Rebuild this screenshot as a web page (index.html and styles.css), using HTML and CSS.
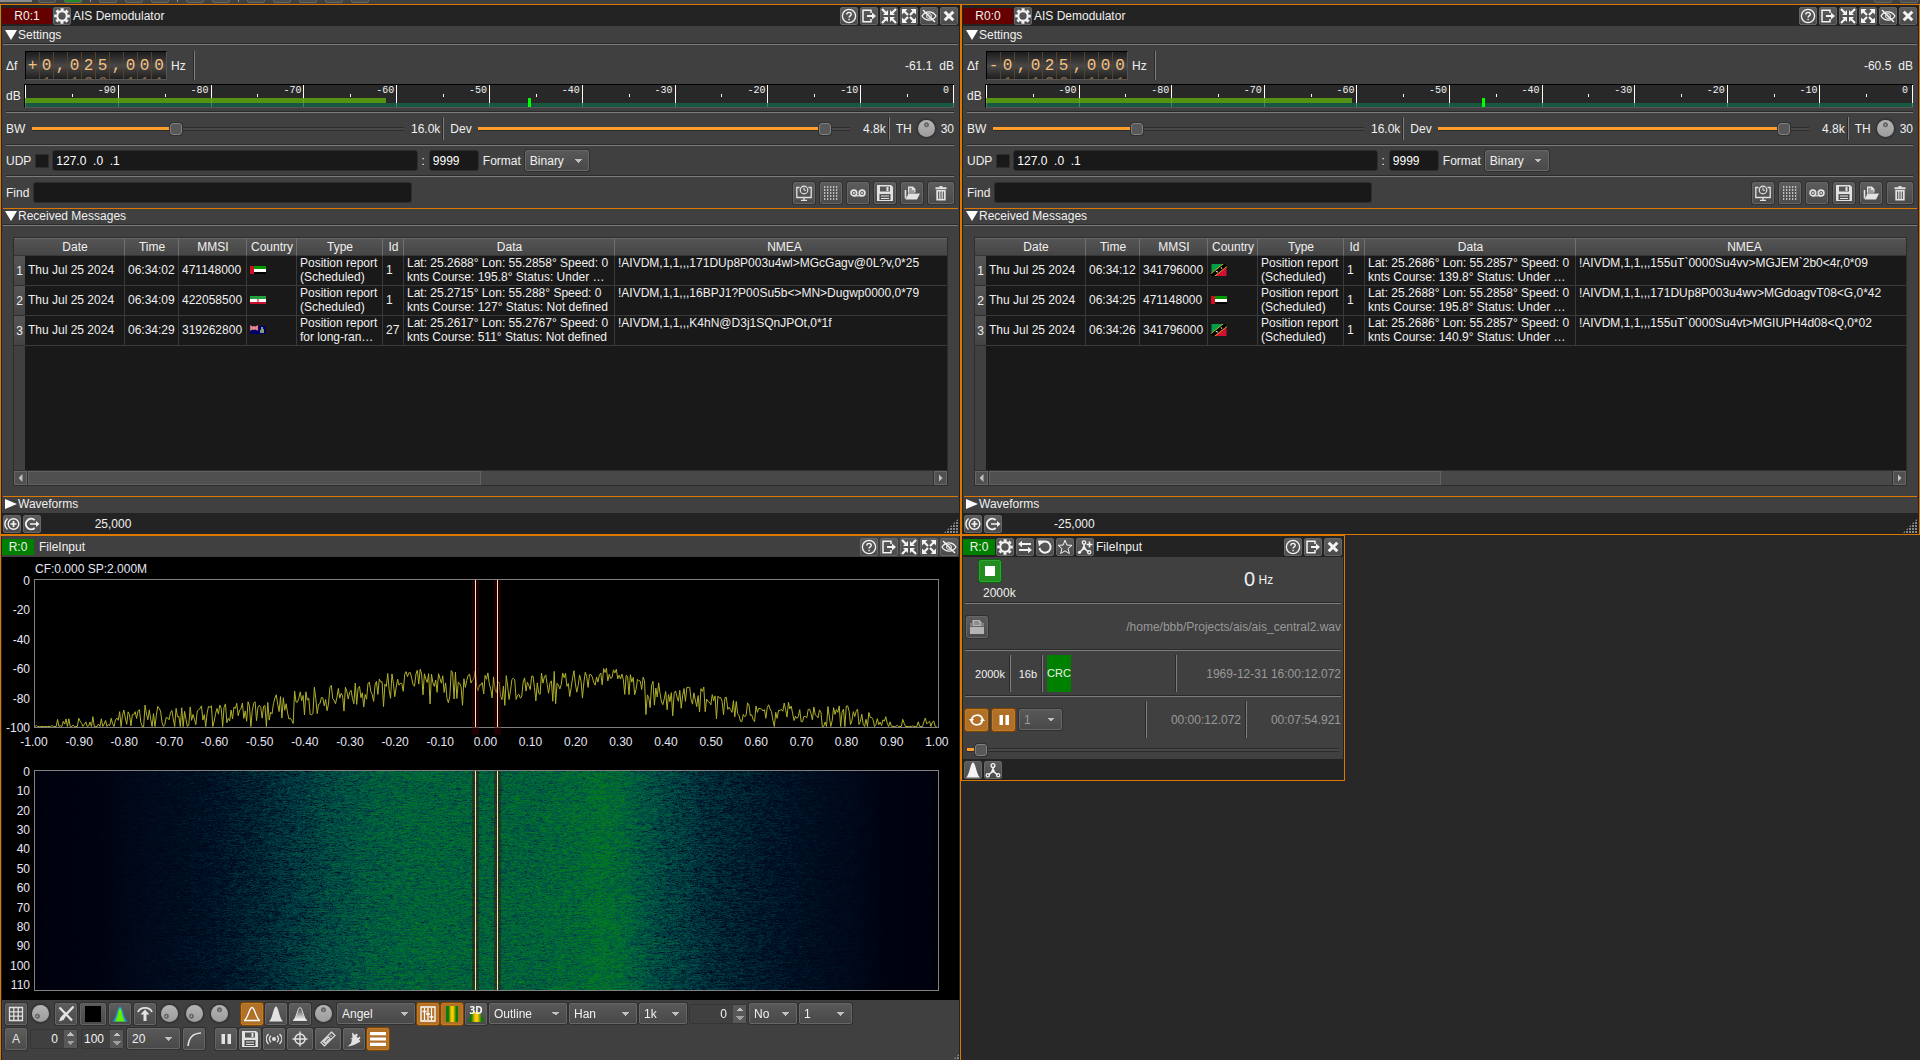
FILE: index.html
```html
<!DOCTYPE html>
<html lang="en">
<head>
  <meta charset="UTF-8">
  <meta name="viewport" content="width=device-width, initial-scale=1">
  <title>AIS Demodulator</title>
  <link rel="stylesheet" href="styles.css">
</head>
<body>

  <!-- icon sprite -->
  <svg class="sprite" aria-hidden="true">
    <defs>
      <linearGradient id="fade" x1="0" y1="0" x2="0" y2="1"><stop offset="0" stop-color="#444"/><stop offset=".3" stop-color="#777"/><stop offset="1" stop-color="#fff"/></linearGradient>
      <linearGradient id="gyg"><stop offset="0" stop-color="#0a7a0a"/><stop offset=".2" stop-color="#0a7a0a"/><stop offset=".45" stop-color="#ffc800"/><stop offset=".6" stop-color="#ffc800"/><stop offset=".85" stop-color="#0a7a0a"/><stop offset="1" stop-color="#0a7a0a"/></linearGradient>
    </defs>
    <symbol id="help" viewBox="0 0 16 16"><circle cx="8" cy="8" r="6.6" fill="none" stroke="currentColor" stroke-width="1.3"/><path d="M5.800 6.600c0-3 4.500-2.900 4.500-.3 0 1.600-2.200 1.600-2.200 3.300M8.100 10.800v1.500" fill="none" stroke="currentColor" stroke-width="1.400"/></symbol>
    <symbol id="export" viewBox="0 0 16 16"><path d="M10 5V2.200H2v11.600h8V11" fill="none" stroke="currentColor" stroke-width="1.500"/><path d="M6 7h5V4.500L15 8l-4 3.500V9H6z" fill="currentColor"/></symbol>
    <symbol id="shrink" viewBox="0 0 16 16"><path d="M1 1l5 5M15 1l-5 5M1 15l5-5M15 15l-5-5" stroke="currentColor" stroke-width="2.200"/><path d="M7 2v5H2zM9 2v5h5zM7 14V9H2zM9 14V9h5z" fill="currentColor"/></symbol>
    <symbol id="expand" viewBox="0 0 16 16"><path d="M3 3l4 4M13 3L9 7M3 13l4-4M13 13L9 9" stroke="currentColor" stroke-width="2.200"/><path d="M1 1h5.500L1 6.500zM15 1H9.500L15 6.500zM1 15h5.500L1 9.500zM15 15H9.500L15 9.500z" fill="currentColor"/></symbol>
    <symbol id="hide" viewBox="0 0 16 16"><path d="M1 8c3.500-5.500 10.500-5.500 14 0-3.500 5.500-10.500 5.500-14 0z" fill="none" stroke="currentColor" stroke-width="1.300"/><circle cx="8" cy="8" r="2.400" fill="none" stroke="currentColor"/><path d="M2 2l12 12" stroke="currentColor" stroke-width="1.500"/></symbol>
    <symbol id="close" viewBox="0 0 16 16"><path d="M3.700 3.700l8.600 8.600M12.300 3.700l-8.600 8.600" stroke="currentColor" stroke-width="3"/></symbol>
    <symbol id="gear" viewBox="0 0 16 16"><circle cx="8" cy="8" r="4.800" fill="none" stroke="currentColor" stroke-width="2.200"/><circle cx="8" cy="8" r="6.700" fill="none" stroke="currentColor" stroke-width="2.200" stroke-dasharray="3 2.260" stroke-dashoffset="1.500"/></symbol>
    <symbol id="swap" viewBox="0 0 16 16"><path d="M5 1.800v2.200h9v2H5v2.200L1 5zM11 7.800V10H2v2h9v2.200l4-3.200z" fill="currentColor"/></symbol>
    <symbol id="reload" viewBox="0 0 16 16"><path d="M4 4.200A5.600 5.600 0 1 1 2.500 9" fill="none" stroke="currentColor" stroke-width="2"/><path d="M1 1.500h6L2 7.500z" fill="currentColor"/></symbol>
    <symbol id="star" viewBox="0 0 16 16"><path d="M8 1.200l1.900 4.900 5.100.2-4 3.300 1.400 5L8 11.800l-4.400 2.800 1.400-5-4-3.300 5.100-.2z" fill="none" stroke="currentColor"/></symbol>
    <symbol id="net" viewBox="0 0 16 16"><path d="M8 5v4L3.500 13M8 9l4.500 4" fill="none" stroke="currentColor" stroke-width="1.600"/><circle cx="8" cy="3.500" r="1.900" fill="none" stroke="currentColor" stroke-width="1.300"/><circle cx="8" cy="9" r="1.700" fill="currentColor"/><circle cx="2.800" cy="13.300" r="1.600" fill="none" stroke="currentColor" stroke-width="1.300"/><circle cx="13.200" cy="13.300" r="1.600" fill="none" stroke="currentColor" stroke-width="1.300"/></symbol>
    <symbol id="net-plus" viewBox="0 0 16 16"><path d="M7 5v4L3 13M7 9l4.500 4M12.500 2.500v6M9.500 5.500h6" fill="none" stroke="currentColor" stroke-width="1.600"/><circle cx="7" cy="3.500" r="1.700" fill="none" stroke="currentColor" stroke-width="1.300"/><circle cx="7" cy="9" r="1.700" fill="currentColor"/><circle cx="2.500" cy="13.300" r="1.600" fill="currentColor"/><circle cx="12.200" cy="13.300" r="1.600" fill="none" stroke="currentColor" stroke-width="1.300"/></symbol>
    <symbol id="monitor" viewBox="0 0 16 16"><path d="M3.500 2.500H.8v10h14.400v-10h-2.700M8 12.500V15M5 15.300h6" fill="none" stroke="currentColor" stroke-width="1.300"/><circle cx="8" cy="5" r="3.800" fill="none" stroke="currentColor" stroke-width="1.200"/><path d="M8 2.500V5.300h2" fill="none" stroke="currentColor"/></symbol>
    <symbol id="dots" viewBox="0 0 16 16"><path d="M1 2h15M1 5h15M1 8h15M1 11h15M1 14h15" stroke="currentColor" stroke-width="1.300" stroke-dasharray="1.300 1.700"/></symbol>
    <symbol id="reels" viewBox="0 0 16 16"><g fill="none" stroke="currentColor"><circle cx="3.900" cy="8" r="2.800" stroke-width="1.700"/><circle cx="12.100" cy="8" r="2.800" stroke-width="1.700"/><path d="M4 10.800h8" stroke-width="1.200"/></g><circle cx="3.900" cy="8" r="1" fill="currentColor"/><circle cx="12.100" cy="8" r="1" fill="currentColor"/></symbol>
    <symbol id="save" viewBox="0 0 16 16"><path fill-rule="evenodd" d="M0 0h14l2 2v14H0zM3 1.500v5h10v-5zM2.500 9v6h11V9z" fill="currentColor"/><path d="M9.500 2h2v4h-2zM4 10.500h8v1H4zM4 13h8v1H4z" fill="currentColor"/></symbol>
    <symbol id="open" viewBox="0 0 16 16"><path d="M4 1.500h5l2.500 2.500v5H4z" fill="currentColor"/><path d="M1.500 5v8.500" stroke="currentColor" stroke-width="1.600"/><path d="M4.500 8.500H16L13 14.500H1.500z" fill="currentColor"/><path d="M5 4h3M5 6h5.500M4.500 8h8" stroke="#555"/></symbol>
    <symbol id="trash" viewBox="0 0 16 16"><path d="M2.500 2.200h4V1h3v1.200h4v2h-11zM3.300 5h9.400v10.500H3.300z" fill="currentColor"/><path d="M5.700 6.500v7.500M8 6.500v7.500M10.300 6.500v7.500" stroke="#444" stroke-width="1"/></symbol>
    <symbol id="add-source" viewBox="0 0 16 16"><g fill="none" stroke="currentColor" stroke-width="1.400"><circle cx="9.500" cy="8" r="5.300"/><path d="M3.500 2.500C0 5.500 0 10.500 3.500 13.500"/><path d="M9.500 5v6M6.500 8h6" stroke-width="1.700"/></g></symbol>
    <symbol id="goto" viewBox="0 0 16 16"><path d="M10.700 4A5.300 5.300 0 1 0 10.700 12" fill="none" stroke="currentColor" stroke-width="2"/><path d="M6 7.300h6V5l3.500 3-3.500 3V8.800H6z" fill="currentColor"/></symbol>
    <symbol id="grid" viewBox="0 0 16 16"><path d="M1.500 1.500h13v13h-13zM1.500 5.800h13M1.500 10.200h13M5.800 1.500v13M10.200 1.500v13" fill="none" stroke="currentColor" stroke-width="1.300"/></symbol>
    <symbol id="clear" viewBox="0 0 16 16"><path d="M15.500 .500L8 8.500M1.500 1.500l12.500 13" stroke="currentColor" stroke-width="2.300"/><path d="M9.500 7.500L5.500 14l-4.500 1.500 1.500-4 5-5.500z" fill="currentColor"/></symbol>
    <symbol id="phosphor" viewBox="0 0 16 16"><path d="M0 15.500C4 14 5 1 8 .500c3 .5 4 13.500 8 15z" fill="#2090e0"/><path d="M2.500 15.500C5.500 14 6 3 8 2c2 1 2.500 12 5.500 13.500z" fill="#60f000"/></symbol>
    <symbol id="up" viewBox="0 0 16 16"><path d="M1 6C3 .500 13 .500 15 6" fill="none" stroke="currentColor" stroke-width="1.800"/><path d="M8 3.500l4.500 5h-3V15h-3V8.500h-3z" fill="currentColor"/></symbol>
    <symbol id="peak-line" viewBox="0 0 16 16"><path d="M0 14.500C4 13.500 5 1.500 8 1.500s4 12 8 13z" fill="none" stroke="currentColor" stroke-width="1.300"/></symbol>
    <symbol id="peak-fill" viewBox="0 0 16 16"><path d="M1 15.500C4.500 13 5.500 .500 8 .500s3.500 12.500 7 15z" fill="currentColor"/></symbol>
    <symbol id="peak-fade" viewBox="0 0 16 16"><path d="M1 14.500C4.500 13 5.500 1.500 8 1.500s3.500 11.500 7 13z" fill="url(#fade)" stroke="#ddd"/></symbol>
    <symbol id="levels" viewBox="0 0 16 16"><path d="M1 1h14v14H1z" fill="none" stroke="currentColor" stroke-width="1.300"/><path d="M4.500 2v12M8 2v12M11.500 2v12M2.500 5.500h4M6 8h4M9.500 11h4" stroke="currentColor" stroke-width="1.300"/></symbol>
    <symbol id="colormap" viewBox="0 0 16 16"><path d="M2 0h12v16H2z" fill="url(#gyg)"/></symbol>
    <symbol id="curve" viewBox="0 0 16 16"><path d="M2 15C3 7 6 2.500 15 2" fill="none" stroke="currentColor" stroke-width="1.600"/></symbol>
    <symbol id="pause" viewBox="0 0 16 16"><path d="M3.500 3H7v10H3.500zM9.500 3H13v10H9.500z" fill="currentColor"/></symbol>
    <symbol id="radio" viewBox="0 0 16 16"><circle cx="8" cy="8" r="2" fill="currentColor"/><path d="M5 4.800c-2 2-2 4.400 0 6.400M2.500 3c-3 3-3 7 0 10M11 4.800c2 2 2 4.400 0 6.400M13.500 3c3 3 3 7 0 10" fill="none" stroke="currentColor" stroke-width="1.300"/></symbol>
    <symbol id="target" viewBox="0 0 16 16"><circle cx="8" cy="8" r="5" fill="none" stroke="currentColor" stroke-width="1.500"/><path d="M8 .500v15M.500 8h15" stroke="currentColor" stroke-width="1.400"/></symbol>
    <symbol id="ruler" viewBox="0 0 16 16"><path d="M11.500 1L15 4.500 4.500 15 1 11.500zM3.500 11l5-5 1.500 1.500-5 5zM10.500 4.500l1 1" fill="none" stroke="currentColor" stroke-width="1.200"/></symbol>
    <symbol id="plug" viewBox="0 0 16 16"><path d="M6 1.500l3 2.500 1.500-1.500 1.500 1.500-1.500 1.500 1.500 1.500 1.500-1.500 1 1.500-1.500 1.500 1.500 2-4.500 2.500-3.500 1.500-5 1 3.500-3 1-4-1.500-1 2-.5z" fill="currentColor"/></symbol>
    <symbol id="menu" viewBox="0 0 16 16"><path d="M0 1h16v3.200H0zM0 6.400h16v3.200H0zM0 11.800h16V15H0z" fill="currentColor"/></symbol>
    <symbol id="stop" viewBox="0 0 16 16"><path d="M3 3h10v10H3z" fill="currentColor"/></symbol>
    <symbol id="loop" viewBox="0 0 16 16"><path d="M2.500 8A5.700 5.700 0 0 1 13.500 7M13.500 8A5.700 5.700 0 0 1 2.500 9" fill="none" stroke="currentColor" stroke-width="1.700"/><path d="M0 7h5L2.500 10.500zM11 9h5l-2.500-3.500z" fill="currentColor"/></symbol>
    <symbol id="file" viewBox="0 0 16 16"><path d="M1 8h14v7H1zM3.500 1h7l2 2v4h-9zM1.500 4h1v3.500h-1zM13.500 4h1v3.500h-1z" fill="currentColor"/><path d="M5 3h5M5 5h6M1 7.500h14" stroke="#666"/></symbol>

    <symbol id="flag-ae" viewBox="0 0 16 8"><path fill="#009a00" d="M0 0h16v3H0z"/><path fill="#fff" d="M0 3h16v3H0z"/><path fill="#000" d="M0 6h16v2H0z"/><path fill="#d01020" d="M0 0h4v8H0z"/></symbol>
    <symbol id="flag-ir" viewBox="0 0 16 8"><path fill="#239f40" d="M0 0h16v3H0z"/><path fill="#fff" d="M0 3h16v3H0z"/><path fill="#c8102e" d="M0 6h16v2H0z"/><path fill="#d88" d="M7 3h2v3H7z"/></symbol>
    <symbol id="flag-ky" viewBox="0 0 16 8"><path fill="#00006b" d="M0 0h16v8H0z"/><path stroke="#e88" stroke-width="1.500" d="M0 0l8 4M8 0L0 4M4 0v4M0 2h8"/><path fill="#8a9a70" d="M11 1h2v2h1v4h-4V4h1z"/></symbol>
    <symbol id="flag-kn" viewBox="0 0 15 12"><path fill="#009e49" d="M0 0h15L0 12z"/><path fill="#d21034" d="M15 0v12H0z"/><path stroke="#e8c020" stroke-width="5" d="M0 12L15 0"/><path stroke="#000" stroke-width="3.600" d="M0 12L15 0"/><path fill="#fff" d="M4 7l2 0 0 2zM9 3l2 1-1 1z"/></symbol>
  </svg>

  <div class="toolbar" id="toolbar"></div>

  <main class="desk">
    <section class="panel" id="ais1"></section>
    <section class="panel" id="ais0"></section>

    <section class="panel spectrum">
      <header class="title-bar plain">
        <span class="badge green">R:0</span>
        <h2 class="spaced">FileInput</h2>
        <button class="tool" aria-label="Help"><svg><use href="#help"/></svg></button>
        <button class="tool" aria-label="Move to workspace"><svg><use href="#export"/></svg></button>
        <button class="tool" aria-label="Shrink"><svg><use href="#shrink"/></svg></button>
        <button class="tool" aria-label="Maximize"><svg><use href="#expand"/></svg></button>
        <button class="tool" aria-label="Hide"><svg><use href="#hide"/></svg></button>
      </header>
      <div class="plots">
        <div class="caption">CF:0.000 SP:2.000M</div>
        <div class="axis-y"><span>0</span><span>-20</span><span>-40</span><span>-60</span><span>-80</span><span>-100</span></div>
        <div class="plot">
          <canvas id="trace"></canvas>
          <i class="marker low"></i><i class="marker high"></i>
        </div>
        <div class="axis-x" id="freqAxis"></div>
        <div class="axis-y times" id="timeAxis"></div>
        <div class="plot">
          <canvas id="waterfall"></canvas>
          <i class="marker low"></i><i class="marker high"></i>
        </div>
      </div>
      <div class="controls">
        <div class="control-row">
          <div class="group">
            <button class="btn" aria-label="Grid"><svg><use href="#grid"/></svg></button>
            <input type="range" class="knob down" aria-label="Grid intensity">
            <button class="btn" aria-label="Clear spectrum"><svg><use href="#clear"/></svg></button>
            <button class="btn wide" aria-label="Trace color"><span class="swatch"></span></button>
            <button class="btn" aria-label="Phosphor"><svg><use href="#phosphor"/></svg></button>
            <button class="btn" aria-label="Max hold"><svg><use href="#up"/></svg></button>
            <input type="range" class="knob down" aria-label="Decay">
            <input type="range" class="knob down" aria-label="Decay divisor">
            <input type="range" class="knob" aria-label="Stroke">
          </div>
          <div class="group tight">
            <button class="btn on" aria-label="Line"><svg><use href="#peak-line"/></svg></button>
            <button class="btn" aria-label="Fill"><svg><use href="#peak-fill"/></svg></button>
            <button class="btn" aria-label="Gradient"><svg><use href="#peak-fade"/></svg></button>
            <input type="range" class="knob" aria-label="Trace intensity">
            <select class="w78" aria-label="Color map"><option>Angel</option></select>
            <button class="btn on" aria-label="Invert"><svg><use href="#levels"/></svg></button>
            <button class="btn on" aria-label="Waterfall"><svg><use href="#colormap"/></svg></button>
            <button class="btn" aria-label="3D spectrogram"><svg viewBox="0 0 16 16"><path d="M4 6h8l4 10H0z" fill="url(#gyg)"/><text x="8" y="8" class="cube">3D</text></svg></button>
            <select class="w78" aria-label="3D style"><option>Outline</option></select>
            <select class="w68" aria-label="Window"><option>Han</option></select>
            <select class="w48" aria-label="FFT size"><option>1k</option></select>
            <span class="spin w58"><input type="number" value="0" aria-label="Overlap"><span class="steps"><button aria-label="Up"></button><button aria-label="Down"></button></span></span>
            <select class="w48" aria-label="Averaging mode"><option>No</option></select>
            <select class="w53" aria-label="Averages"><option>1</option></select>
          </div>
        </div>
        <div class="control-row">
          <div class="group">
            <button class="btn">A</button>
            <span class="spin w48"><input type="number" value="0" aria-label="Reference level"><span class="steps"><button aria-label="Up"></button><button aria-label="Down"></button></span></span>
            <span class="spin w43"><input type="number" value="100" aria-label="Range"><span class="steps"><button aria-label="Up"></button><button aria-label="Down"></button></span></span>
            <select class="w53" aria-label="Frame rate"><option>20</option></select>
            <button class="btn" aria-label="Log or linear"><svg><use href="#curve"/></svg></button>
          </div>
          <div class="group tight">
            <button class="btn" aria-label="Freeze"><svg><use href="#pause"/></svg></button>
            <button class="btn" aria-label="Save"><svg><use href="#save"/></svg></button>
            <button class="btn" aria-label="Spectrum server"><svg><use href="#radio"/></svg></button>
            <button class="btn wide" aria-label="Markers"><svg><use href="#target"/></svg></button>
            <button class="btn wide" aria-label="Measurements"><svg><use href="#ruler"/></svg></button>
            <button class="btn" aria-label="Calibration"><svg><use href="#plug"/></svg></button>
            <button class="btn on" aria-label="Controls"><svg><use href="#menu"/></svg></button>
          </div>
        </div>
        <span class="grip"></span>
      </div>
    </section>

    <section class="panel device">
      <header class="title-bar">
        <span class="badge green">R:0</span>
        <button class="tool" aria-label="Settings"><svg><use href="#gear"/></svg></button>
        <button class="tool" aria-label="Change device"><svg><use href="#swap"/></svg></button>
        <button class="tool" aria-label="Reload"><svg><use href="#reload"/></svg></button>
        <button class="tool" aria-label="Presets"><svg><use href="#star"/></svg></button>
        <button class="tool" aria-label="Add channel"><svg><use href="#net-plus"/></svg></button>
        <h2>FileInput</h2>
        <button class="tool" aria-label="Help"><svg><use href="#help"/></svg></button>
        <button class="tool" aria-label="Move to workspace"><svg><use href="#export"/></svg></button>
        <button class="tool" aria-label="Close"><svg><use href="#close"/></svg></button>
      </header>
      <div class="device-body">
        <div class="device-row run">
          <div class="rate">
            <button class="btn play" aria-label="Stop"><svg><use href="#stop"/></svg></button>
            <span>2000k</span>
          </div>
          <div class="freq"><span class="big">0</span> <span>Hz</span></div>
        </div>
        <hr>
        <div class="device-row path">
          <button class="btn" aria-label="Open file" disabled><svg><use href="#file"/></svg></button>
          <span class="dim push">/home/bbb/Projects/ais/ais_central2.wav</span>
        </div>
        <hr>
        <div class="device-row format">
          <span class="small cell-rate">2000k</span><i class="vsep"></i>
          <span class="small cell-bits">16b</span><i class="vsep"></i>
          <span class="crc small">CRC</span>
          <i class="vsep push"></i><span class="dim cell-date">1969-12-31 16:00:12.072</span>
        </div>
        <hr>
        <div class="device-row format">
          <button class="btn on big-btn" aria-label="Loop"><svg><use href="#loop"/></svg></button>
          <button class="btn on big-btn" aria-label="Pause"><svg><use href="#pause"/></svg></button>
          <select class="w43" aria-label="Acceleration" disabled><option>1</option></select>
          <i class="vsep push"></i><span class="dim cell-time">00:00:12.072</span>
          <i class="vsep"></i><span class="dim cell-time">00:07:54.921</span>
        </div>
        <div class="seek"><input type="range" class="slider" min="0" max="1000" value="22" style="--fill: 3%" aria-label="Position"></div>
      </div>
      <footer class="status-bar">
        <button class="tool" aria-label="Spectrum"><svg><use href="#peak-fill"/></svg></button>
        <button class="tool" aria-label="Channels"><svg><use href="#net"/></svg></button>
      </footer>
    </section>
  </main>

  <script src="app.js"></script>
</body>
</html>
```

FILE: styles.css
```css
* {
  box-sizing: border-box;
}
body {
  margin: 0;
  height: 100vh;
  overflow: hidden;
  display: flex;
  flex-direction: column;
  background: #282828;
  color: #f0f0f0;
  font: 12px/14px "Liberation Sans", Arial, sans-serif;
}
button, input, select {
  font: inherit;
  color: inherit;
  margin: 0;
}
h2 {
  margin: 0;
  font-size: 12px;
  font-weight: normal;
}
hr {
  margin: 0;
  height: 2px;
  border: 0;
  border-top: 1px solid #2a2a2a;
  background: #7d7d7d;
}
.sprite {
  position: absolute;
  width: 0;
  height: 0;
}

/* main toolbar, scrolled almost out of view */
.toolbar {
  flex: none;
  height: 4px;
  padding: 0 2px 1px 0;
  overflow: hidden;
  display: flex;
  align-items: flex-end;
  gap: 8px;
  background: #404040;
}
.toolbar .tab {
  width: 32px;
  height: 2px;
  margin-right: -2px;
  align-self: flex-start;
  background: #8c8c8c;
}
.toolbar .tab.gap {
  width: 1px;
  margin: 0;
}
.toolbar .tab.end {
  margin-left: auto;
  width: 0;
}
.toolbar .tool.go {
  background: #228b22;
}

.desk {
  flex: 1;
  min-height: 0;
  display: grid;
  grid-template-columns: 961fr 959fr;
  grid-template-rows: auto minmax(0, 1fr);
}
.panel {
  min-width: 0;
  border: 1px solid #dc7800;
  padding: 0 1px;
  background: #232323;
  display: flex;
  flex-direction: column;
}
.spectrum {
  border-bottom: 0;
}
.title-bar {
  height: 21px;
  padding: 1px 1px 0 0;
  display: flex;
  align-items: center;
  gap: 2px;
  background: #232323;
}
.title-bar.plain {
  background: #404040;
}
.title-bar h2 {
  flex: 1;
}
.title-bar h2.spaced {
  margin-left: 4px;
}
.badge {
  width: 50px;
  height: 16px;
  margin-right: -1px;
  line-height: 16px;
  text-align: center;
  background: #640000;
}
.badge.green {
  width: 32px;
  background: #008000;
}

/* buttons */
.tool, .btn {
  flex: none;
  display: flex;
  align-items: center;
  justify-content: center;
  padding: 0;
  color: #f4f4f4;
  background: linear-gradient(#5c5c5c, #4b4b4b);
  border: 1px solid #666;
  border-radius: 2px;
}
.tool {
  width: 18px;
  height: 18px;
}
.tool svg {
  width: 16px;
  height: 16px;
}
.btn {
  width: 22px;
  height: 22px;
  color: #e2e2e2;
  box-shadow: 0 0 0 1px #303030;
}
.btn svg {
  width: 16px;
  height: 16px;
}
.btn.wide {
  width: 26px;
}
.btn.big-btn {
  width: 23px;
}
.btn.on {
  color: #fff;
  background: #b07028;
  border-color: #c07c2c;
  box-shadow: 0 0 0 1px #7c4600;
}
.btn.play {
  width: 22px;
  color: #fff;
  background: #228b22;
  border-color: #2fa52f;
  box-shadow: 0 0 0 1px #0a6410;
}
.btn:disabled {
  color: #b4b4b4;
}
.cube {
  font: bold 10px "Open Sans", sans-serif;
  text-anchor: middle;
  fill: #fff;
}
.swatch {
  width: 16px;
  height: 16px;
  background: #000;
}

/* fields */
input[type=text] {
  min-width: 0;
  height: 21px;
  padding: 0 3px;
  color: #fff;
  background: #191919;
  border: 1px solid #2e2e2e;
  border-radius: 3px;
}
.tick {
  appearance: none;
  flex: none;
  width: 14px;
  height: 14px;
  background: #191919;
  border: 1px solid #2e2e2e;
}
select {
  appearance: none;
  flex: none;
  height: 21px;
  padding: 0 20px 0 4px;
  border: 1px solid #666;
  border-radius: 2px;
  box-shadow: 0 0 0 1px #303030;
  background:
    linear-gradient(45deg, transparent 50%, #c0c0c0 50%) right 10px center / 4px 4px no-repeat,
    linear-gradient(-45deg, transparent 50%, #c0c0c0 50%) right 6px center / 4px 4px no-repeat,
    linear-gradient(#585858, #494949);
}
select:disabled {
  color: #999;
  opacity: 1;
}
.w43 { width: 43px; }
.w48 { width: 48px; }
.w53 { width: 53px; }
.w58 { width: 58px; }
.w64 { width: 64px; }
.w68 { width: 68px; }
.w78 { width: 78px; }
.spin {
  flex: none;
  height: 20px;
  display: flex;
  border: 1px solid #363636;
  border-radius: 2px;
}
.spin input {
  appearance: textfield;
  flex: 1;
  min-width: 0;
  padding: 0 6px 0 0;
  text-align: right;
  background: none;
  border: 0;
}
.spin input::-webkit-inner-spin-button {
  display: none;
}
.steps {
  width: 13px;
  display: flex;
  flex-direction: column;
  background: #585858;
}
.steps button {
  flex: 1;
  padding: 0;
  border: 0;
  background:
    linear-gradient(-45deg, #c0c0c0 50%, transparent 50%) 3px center / 4px 4px no-repeat,
    linear-gradient(45deg, #c0c0c0 50%, transparent 50%) 7px center / 4px 4px no-repeat;
}
.steps button + button {
  background:
    linear-gradient(45deg, transparent 50%, #a0a0a0 50%) 3px center / 4px 4px no-repeat,
    linear-gradient(-45deg, transparent 50%, #a0a0a0 50%) 7px center / 4px 4px no-repeat;
}
.slider {
  appearance: none;
  flex: 1;
  min-width: 0;
  height: 14px;
  background:
    linear-gradient(#ff9c2a, #ff9c2a) left center / var(--fill) 3px no-repeat,
    linear-gradient(#2c2c2c 1px, #484848 1px 3px, #2c2c2c 3px) center / 100% 4px no-repeat;
}
.slider::-webkit-slider-thumb {
  appearance: none;
  width: 12px;
  height: 12px;
  border: 1px solid #808080;
  border-radius: 3px;
  background: #585858;
  box-shadow: 0 0 0 1px #303030;
}
.knob {
  appearance: none;
  flex: none;
  width: 17px;
  height: 17px;
  border-radius: 50%;
  background:
    radial-gradient(circle at 50% 28%, #999 1px, #666 1px 2px, transparent 3px),
    linear-gradient(#b4b4b4, #9c9c9c);
  box-shadow: 0 0 0 2px #363636;
}
.knob.down {
  background:
    radial-gradient(circle at 32% 66%, #999 1px, #666 1px 2px, transparent 3px),
    linear-gradient(#b4b4b4, #9c9c9c);
}
.knob::-webkit-slider-thumb {
  appearance: none;
  width: 0;
  height: 0;
}
.vsep {
  flex: none;
  align-self: stretch;
  width: 2px;
  border-left: 1px solid #2a2a2a;
  background: #7d7d7d;
}
.push {
  margin-left: auto;
}

/* channel panel */
.channel {
  background: #404040;
}
.settings {
  padding-top: 1px;
}
.roll {
  height: 18px;
  margin: 0 1px;
  padding: 0 0 3px 2px;
  border-top: 1px solid transparent;
  display: flex;
  align-items: center;
  gap: 1px;
  box-shadow: inset 0 -1px #7d7d7d, inset 0 -2px #2a2a2a;
}
.roll.line {
  border-top-color: #dc7800;
}
.roll.closed {
  height: 17px;
  padding-bottom: 2px;
  box-shadow: none;
}
.arrow {
  width: 12px;
  height: 10px;
  background: #fff;
  clip-path: polygon(0 0, 100% 0, 50% 100%);
}
.closed .arrow {
  clip-path: polygon(0 0, 100% 50%, 0 100%);
}
.rows {
  padding: 6px 5px 0 4px;
}
.row {
  display: flex;
  align-items: center;
}
.row.delta {
  height: 29px;
  gap: 4px;
}
.delta label {
  width: 15px;
}
.delta .vsep {
  margin-left: 3px;
}
.power {
  margin-left: auto;
}
.unit {
  margin-left: 3px;
}
.dial {
  display: flex;
  height: 29px;
  overflow: hidden;
  border: 1px solid #111;
  border-color: #000 #555 #555 #000;
  color: #f6c080;
  font: 16px/18px "Liberation Mono", monospace;
}
.dial span {
  width: 14px;
  height: 54px;
  margin-top: -13px;
  text-align: center;
  border-right: 1px solid #5a4126;
  background: linear-gradient(#1c1c1c 13px, #484848 27px, #1c1c1c 41px);
}
.dial span:last-child {
  border-right: 0;
}
.dial span::before, .dial span::after {
  display: block;
  height: 18px;
  color: #8a6a45;
  content: attr(data-prev);
}
.dial span::after {
  content: attr(data-next);
}
.row.level {
  margin: 4px 0 3px;
  height: 24px;
  gap: 4px;
}
.level > span {
  width: 14px;
}
.meter {
  position: relative;
  flex: 1;
  height: 24px;
  padding-left: 1px;
  border: 1px solid #000;
  border-width: 1px 0 0 1px;
  border-bottom: 1px solid #555;
  background: #282828;
}
.scale {
  position: relative;
  height: 22px;
  display: grid;
  grid-template-columns: repeat(10, 1fr);
  border-left: 1px solid #fff;
  margin-left: -1px;
  font: 10px/11px "Liberation Mono", monospace;
}
.scale span {
  position: relative;
  padding: 0 2px 0 0;
  text-align: right;
  border-right: 1px solid #fff;
}
.scale span::after {
  content: "";
  position: absolute;
  left: 50%;
  top: 9px;
  width: 1px;
  height: 3px;
  background: #fff;
}
.scale span:last-child {
  padding-right: 4px;
}
.bar, .average, .peak {
  position: absolute;
  z-index: 1;
  left: 0;
  bottom: 0;
  opacity: .9;
}
.average {
  right: 0;
  height: 4px;
  background: #146446;
  opacity: .8;
}
.bar {
  bottom: 4px;
  height: 5px;
  background: #5a9c10;
}
.peak {
  width: 3px;
  height: 9px;
  background: #0f0;
  opacity: 1;
}
.row.bandwidth {
  height: 31px;
  gap: 6px;
}
.bandwidth .first {
  margin-right: 1px;
}
.bandwidth output {
  min-width: 30px;
  text-align: right;
}
.bandwidth .vsep {
  margin: 4px 0 4px -4px;
}
.bandwidth .threshold {
  min-width: 0;
}
.row.udp {
  height: 29px;
  gap: 4px;
}
.udp .tick {
  margin-right: -1px;
}
.udp .port {
  width: 50px;
}
.udp .address, .udp .space, .find .field, .find .space {
  flex: 1;
}
.udp .space {
  margin-left: 4px;
}
.row.find {
  height: 31px;
  gap: 5px;
}
.find label {
  margin-right: -1px;
}
.find .trash {
  width: 26px;
}

/* received messages */
.messages {
  margin: 11px 11px 10px;
  height: 249px;
  display: flex;
  flex-direction: column;
  border: 1px solid #2d2d2d;
  background: linear-gradient(90deg, #404040 11px, #191919 11px);
}
table {
  width: 100%;
  table-layout: fixed;
  border-spacing: 0;
}
.c-num { width: 11px; }
.c-date { width: 100px; }
.c-time { width: 54px; }
.c-mmsi { width: 68px; }
.c-country { width: 50px; }
.c-type { width: 86px; }
.c-id { width: 21px; }
.c-data { width: 211px; }
th {
  padding: 0;
  font-weight: normal;
}
thead th {
  height: 18px;
  padding-left: 1px;
  border-top: 1px solid #686868;
  border-bottom: 1px solid #363636;
  border-right: 1px solid #707070;
  background: linear-gradient(#545454, #464646);
  white-space: nowrap;
}
thead th:first-child, thead th:last-child {
  border-right: 0;
}
thead th:last-child {
  padding-left: 7px;
}
tbody th {
  border-bottom: 1px solid #2d2d2d;
  background: linear-gradient(#555, #444);
}
td {
  height: 30px;
  padding: 0 3px 1px;
  border-right: 1px solid #3a3a3a;
  border-bottom: 1px solid #3a3a3a;
  background: #191919;
  white-space: nowrap;
  overflow: hidden;
}
td:last-child {
  border-right: 0;
  vertical-align: top;
}
td svg {
  display: block;
  width: 16px;
  height: 12px;
}
.scrollbar {
  margin-top: auto;
  height: 15px;
  padding-top: 1px;
  display: flex;
  gap: 1px;
  background: #303030;
}
.scrollbar button {
  width: 13px;
  padding: 0;
  border: 1px solid #666;
  background: #505050;
  display: flex;
  align-items: center;
  justify-content: center;
}
.scrollbar i {
  width: 4px;
  height: 8px;
  background: #c0c0c0;
  clip-path: polygon(100% 0, 100% 100%, 0 50%);
}
.scrollbar button:last-child i {
  clip-path: polygon(0 0, 100% 50%, 0 100%);
}
.track {
  flex: 1;
  background: #484848;
}
.thumb {
  width: 50%;
  height: 14px;
  border: 1px solid #626262;
  background: #505050;
}
.status-bar {
  height: 21px;
  padding: 0 1px;
  display: flex;
  align-items: center;
  gap: 2px;
  background: #232323;
}
.offset {
  width: 40px;
  margin-left: 50px;
  text-align: center;
}
.grip {
  width: 14px;
  height: 14px;
  margin: 5px 0 0 auto;
  background: radial-gradient(circle at 1px 1px, #888 1px, transparent 1px) 0 0 / 3px 3px;
  clip-path: polygon(100% 0, 100% 100%, 0 100%);
}

/* spectrum */
.plots {
  flex: 1;
  min-height: 0;
  padding: 0 20px 9px 0;
  display: grid;
  grid-template-columns: 32px 1fr;
  grid-template-rows: 22px 149px 42px minmax(0, 1fr);
  background: #000;
  color: #e6e6f5;
}
.caption {
  grid-column: 2;
  padding-left: 1px;
  line-height: 24px;
}
.axis-y {
  margin: -5px 4px -7px 0;
  display: flex;
  flex-direction: column;
  justify-content: space-between;
  text-align: right;
}
.axis-y.times {
  margin-bottom: -1px;
}
.axis-x {
  grid-column: 2;
  margin: 0 -18px 0 -20px;
  display: flex;
  justify-content: space-between;
  line-height: 28px;
}
.axis-x span {
  width: 40px;
  text-align: center;
}
.plot {
  position: relative;
  min-width: 0;
  border: 1px solid #808080;
}
.plot canvas {
  position: absolute;
  width: 100%;
  height: 100%;
}
.marker {
  position: absolute;
  top: 0;
  bottom: -8px;
  width: 7px;
  margin-left: -3px;
  background: linear-gradient(90deg, transparent 3px, #f5e6c0 3px 4px, transparent 4px) top / 100% calc(100% - 8px) no-repeat, rgba(80, 0, 0, .4);
}
.marker.low {
  left: 48.7%;
}
.marker.high {
  left: 51.2%;
}
.times + .plot .marker {
  bottom: 0;
  background-size: 100% 100%;
}
.controls {
  position: relative;
  height: 60px;
  padding: 1px 3px;
  background: #404040;
}
.control-row {
  height: 25px;
  display: flex;
  align-items: center;
}
.group {
  display: flex;
  align-items: center;
  gap: 3px;
}
.group.tight {
  gap: 2px;
  margin-left: 10px;
}
.group .knob {
  margin: 0 3px 0 2px;
}
.controls .grip {
  position: absolute;
  right: 0;
  bottom: -8px;
}

/* file input */
.device {
  width: 384px;
  align-self: start;
}
.device-body {
  padding: 0 2px;
  background: #404040;
}
.device-row {
  display: flex;
  align-items: center;
}
.run {
  height: 45px;
}
.rate {
  width: 230px;
  padding: 1px 0 0 14px;
  display: flex;
  flex-direction: column;
  gap: 4px;
}
.rate span {
  margin-left: 4px;
}
.freq {
  margin-left: 49px;
}
.big {
  font-size: 20px;
  vertical-align: -2px;
}
.dim {
  color: #999;
}
.small {
  font-size: 11px;
}
.path {
  height: 45px;
  padding: 0 0 0 1px;
}
.format {
  height: 45px;
  gap: 4px;
}
.format .vsep {
  margin-top: 4px;
  margin-bottom: 4px;
}
.format + hr {
  margin-top: -1px;
}
.cell-rate {
  width: 40px;
  text-align: right;
}
.cell-bits {
  width: 22px;
  text-align: right;
}
.crc {
  width: 24px;
  line-height: 37px;
  text-align: center;
  background: #008000;
}
.cell-date {
  width: 160px;
  text-align: right;
}
.cell-time {
  width: 90px;
  text-align: right;
}
.seek {
  height: 17px;
  padding: 0 2px 2px;
  display: flex;
  align-items: center;
}
```

FILE: app.js
```js
const icon = name => `<svg><use href="#${name}"/></svg>`;
const tool = (name, label) => `<button class="tool" aria-label="${label}">${icon(name)}</button>`;
const btn = (name, label, cls = '') => `<button class="btn ${cls}" aria-label="${label}">${icon(name)}</button>`;

const channels = [
  {
    id: 'ais1', badge: 'R0:1', delta: '+0,025,000', offset: '25,000',
    power: -61.1, bar: 38.9, peak: 54.1,
    rows: [
      ['06:34:02', '471148000', 'ae', 'Position report<br>(Scheduled)', '1', 'Lat: 25.2688° Lon: 55.2858° Speed: 0<br>knts Course: 195.8° Status: Under …', '!AIVDM,1,1,,,171DUp8P003u4wl&gt;MGcGagv@0L?v,0*25'],
      ['06:34:09', '422058500', 'ir', 'Position report<br>(Scheduled)', '1', 'Lat: 25.2715° Lon: 55.288° Speed: 0<br>knts Course: 127° Status: Not defined', '!AIVDM,1,1,,,16BPJ1?P00Su5b&lt;&gt;MN&gt;Dugwp0000,0*79'],
      ['06:34:29', '319262800', 'ky', 'Position report<br>for long-ran…', '27', 'Lat: 25.2617° Lon: 55.2767° Speed: 0<br>knts Course: 511° Status: Not defined', '!AIVDM,1,1,,,K4hN@D3j1SQnJPOt,0*1f']
    ]
  },
  {
    id: 'ais0', badge: 'R0:0', delta: '-0,025,000', offset: '-25,000',
    power: -60.5, bar: 39.5, peak: 53.5,
    rows: [
      ['06:34:12', '341796000', 'kn', 'Position report<br>(Scheduled)', '1', 'Lat: 25.2686° Lon: 55.2857° Speed: 0<br>knts Course: 139.8° Status: Under …', '!AIVDM,1,1,,,155uT`0000Su4vv&gt;MGJEM`2b0&lt;4r,0*09'],
      ['06:34:25', '471148000', 'ae', 'Position report<br>(Scheduled)', '1', 'Lat: 25.2688° Lon: 55.2858° Speed: 0<br>knts Course: 195.8° Status: Under …', '!AIVDM,1,1,,,171DUp8P003u4wv&gt;MGdoagvT08&lt;G,0*42'],
      ['06:34:26', '341796000', 'kn', 'Position report<br>(Scheduled)', '1', 'Lat: 25.2686° Lon: 55.2857° Speed: 0<br>knts Course: 140.9° Status: Under …', '!AIVDM,1,1,,,155uT`0000Su4vt&gt;MGIUPH4d08&lt;Q,0*02']
    ]
  }
];

function dial(text) {
  return [...text].map(c => {
    if (c < '0' || c > '9') return `<span data-prev="&nbsp;" data-next="&nbsp;">${c}</span>`;
    return `<span data-prev="${(+c + 9) % 10}" data-next="${(+c + 1) % 10}">${c}</span>`;
  }).join('');
}

function channelPanel(ch) {
  const scale = [-90, -80, -70, -60, -50, -40, -30, -20, -10, 0].map(v => `<span>${v}</span>`).join('');
  const rows = ch.rows.map((r, i) => `
    <tr>
      <th>${i + 1}</th><td>Thu Jul 25 2024</td><td>${r[0]}</td><td>${r[1]}</td>
      <td><svg><use href="#flag-${r[2]}"/></svg></td>
      <td>${r[3]}</td><td>${r[4]}</td><td>${r[5]}</td><td>${r[6]}</td>
    </tr>`).join('');

  return `
    <header class="title-bar">
      <span class="badge">${ch.badge}</span>
      ${tool('gear', 'Settings')}
      <h2>AIS Demodulator</h2>
      ${tool('help', 'Help')}${tool('export', 'Move to workspace')}${tool('shrink', 'Shrink')}
      ${tool('expand', 'Maximize')}${tool('hide', 'Hide')}${tool('close', 'Close')}
    </header>
    <div class="channel">
      <div class="settings">
        <div class="roll"><i class="arrow"></i>Settings</div>
        <div class="rows">
          <div class="row delta">
            <label>Δf</label>
            <div class="dial">${dial(ch.delta)}</div>
            <span>Hz</span><i class="vsep"></i>
            <span class="power">${ch.power}</span><span class="unit">dB</span>
          </div>
          <div class="row level">
            <span>dB</span>
            <div class="meter">
              <div class="scale">${scale}</div>
              <i class="average"></i>
              <i class="bar" style="width: ${ch.bar}%"></i>
              <i class="peak" style="left: ${ch.peak}%"></i>
            </div>
          </div>
          <hr>
          <div class="row bandwidth">
            <label class="first" for="bw-${ch.id}">BW</label>
            <input type="range" class="slider" id="bw-${ch.id}" max="1000" value="383" style="--fill: 38%">
            <output>16.0k</output><i class="vsep"></i>
            <label for="dev-${ch.id}">Dev</label>
            <input type="range" class="slider" id="dev-${ch.id}" max="1000" value="948" style="--fill: 93%">
            <output>4.8k</output><i class="vsep"></i>
            <label for="th-${ch.id}">TH</label>
            <input type="range" class="knob" id="th-${ch.id}">
            <output class="threshold">30</output>
          </div>
          <hr>
          <div class="row udp">
            <label for="udp-${ch.id}">UDP</label>
            <input type="checkbox" class="tick" id="udp-${ch.id}">
            <input type="text" class="address" value="127.0  .0  .1" aria-label="UDP address">
            <span>:</span>
            <input type="text" class="port" value="9999" aria-label="UDP port">
            <label for="format-${ch.id}">Format</label>
            <select class="w64" id="format-${ch.id}"><option>Binary</option></select>
            <span class="space"></span>
          </div>
          <hr>
          <div class="row find">
            <label for="find-${ch.id}">Find</label>
            <input type="text" class="field" id="find-${ch.id}">
            <span class="space"></span>
            ${btn('monitor', 'Use date and time')}${btn('dots', 'Slot map')}${btn('reels', 'Log')}
            ${btn('save', 'Save log')}${btn('open', 'Read log')}${btn('trash', 'Clear', 'trash')}
          </div>
        </div>
      </div>
      <div class="roll line"><i class="arrow"></i>Received Messages</div>
      <div class="messages">
        <table>
          <colgroup>
            <col class="c-num"><col class="c-date"><col class="c-time"><col class="c-mmsi"><col class="c-country">
            <col class="c-type"><col class="c-id"><col class="c-data"><col>
          </colgroup>
          <thead>
            <tr><th></th><th>Date</th><th>Time</th><th>MMSI</th><th>Country</th><th>Type</th><th>Id</th><th>Data</th><th>NMEA</th></tr>
          </thead>
          <tbody>${rows}</tbody>
        </table>
        <div class="scrollbar">
          <button aria-label="Scroll left"><i></i></button>
          <div class="track"><div class="thumb"></div></div>
          <button aria-label="Scroll right"><i></i></button>
        </div>
      </div>
      <div class="roll line closed"><i class="arrow"></i>Waveforms</div>
    </div>
    <footer class="status-bar">
      ${tool('add-source', 'Add source')}${tool('goto', 'Go to')}
      <span class="offset">${ch.offset}</span>
      <span class="grip"></span>
    </footer>`;
}

channels.forEach(ch => {
  document.getElementById(ch.id).innerHTML = channelPanel(ch);
});

const blank = '<button class="tool" aria-label="Tool"></button>';
const gap = '<i class="tab gap"></i>';
document.getElementById('toolbar').innerHTML =
  '<i class="tab"></i>' + blank + '<button class="tool go" aria-label="Run"></button>' + gap +
  blank.repeat(3) + gap + blank.repeat(2) + gap + blank.repeat(5) +
  '<i class="tab end"></i>' + blank.repeat(2);

// axes
let html = '';
for (let i = -10; i <= 10; i++) html += `<span>${(i / 10).toFixed(2)}</span>`;
document.getElementById('freqAxis').innerHTML = html;
html = '';
for (let i = 0; i <= 110; i += 10) html += `<span>${i}</span>`;
document.getElementById('timeAxis').innerHTML = html;

// seeded noise so every redraw looks the same
let seed = 20240725;
function rnd() {
  seed = (seed * 1664525 + 1013904223) >>> 0;
  return seed / 4294967296;
}

function interp(points, x) {
  for (let i = 1; i < points.length; i++) {
    if (x <= points[i][0]) {
      const [x0, y0] = points[i - 1];
      const [x1, y1] = points[i];
      return y0 + (y1 - y0) * (x - x0) / (x1 - x0);
    }
  }
  return points[points.length - 1][1];
}

function setup(id) {
  const canvas = document.getElementById(id);
  canvas.width = canvas.clientWidth;
  canvas.height = canvas.clientHeight;
  return canvas;
}

// level in dB against frequency
const envelope = [[-1, -104], [-.88, -102], [-.8, -95], [-.77, -92], [-.7, -96], [-.6, -93], [-.54, -92],
  [-.46, -86], [-.38, -81], [-.26, -77], [-.22, -72], [-.15, -69], [-.08, -70], [0, -70], [.03, -74], [.1, -71],
  [.2, -70], [.28, -68], [.32, -70], [.37, -76], [.4, -82], [.48, -81], [.53, -87], [.58, -92], [.65, -91],
  [.75, -94], [.8, -94], [.84, -98], [.9, -102], [.96, -105], [.98, -100], [1, -102]];

function drawTrace() {
  const canvas = setup('trace');
  const g = canvas.getContext('2d');
  const bins = 640;
  g.strokeStyle = '#b0b02c';
  g.beginPath();
  for (let i = 0; i < bins; i++) {
    const level = interp(envelope, i / bins * 2 - 1);
    let db = level + 3 + 11 * Math.log10(-Math.log(rnd() || .01) + .01);
    db = Math.max(-100, Math.min(level + 8, db));
    g.lineTo(i / bins * canvas.width, -db / 100 * canvas.height - .5);
  }
  g.stroke();
}

const heat = [[-1, 0], [-.86, .04], [-.75, .17], [-.6, .26], [-.5, .36], [-.42, .46], [-.35, .57], [-.25, .7],
  [-.15, .76], [.1, .76], [.2, .8], [.25, .86], [.3, .8], [.34, .67], [.4, .54], [.5, .38], [.6, .3],
  [.7, .23], [.8, .16], [.88, .04], [1, 0]];
const palette = [[0, [0, 0, 13]], [.25, [0, 14, 34]], [.5, [0, 58, 66]], [.75, [0, 94, 66]], [1, [4, 122, 30]]];

function drawWaterfall() {
  const canvas = setup('waterfall');
  const g = canvas.getContext('2d');
  const img = g.createImageData(canvas.width, canvas.height);
  const channel = k => palette.map(p => [p[0], p[1][k]]);
  const lut = [0, 1, 2].map(k => Array.from({ length: 101 }, (_, i) => interp(channel(k), i / 100)));
  const base = Array.from({ length: canvas.width }, (_, x) => interp(heat, x / canvas.width * 2 - 1));
  for (let y = 0; y < canvas.height; y++) {
    const shift = (rnd() - .5) * .04;
    let held = 0;
    for (let x = 0; x < canvas.width; x++) {
      held = held * .5 + Math.log10(-Math.log(rnd() || .01) + .05) * .22 + .045;
      const v = base[x] + (held + shift) * Math.min(1, base[x] * 2);
      const t = Math.round(Math.max(0, Math.min(1, v)) * 100);
      const at = (y * canvas.width + x) * 4;
      img.data[at] = lut[0][t];
      img.data[at + 1] = lut[1][t];
      img.data[at + 2] = lut[2][t];
      img.data[at + 3] = 255;
    }
  }
  g.putImageData(img, 0, 0);
}

function draw() {
  seed = 20240725;
  drawTrace();
  drawWaterfall();
}

draw();
window.addEventListener('resize', draw);
```
